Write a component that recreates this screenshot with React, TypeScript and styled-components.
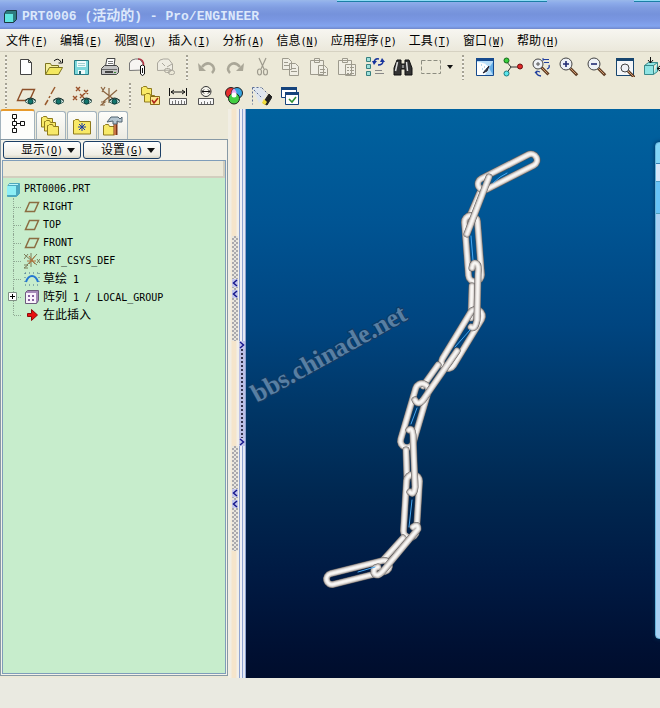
import React from 'react';
import styled, { createGlobalStyle } from 'styled-components';

const GlobalStyle = createGlobalStyle`
  * { box-sizing: border-box; }
  body { margin: 0; background: #ece9d8; }
  button { font: inherit; color: inherit; margin: 0; padding: 0; border: 0; background: none; }
`;

const Window = styled.div`
  display: flex;
  flex-direction: column;
  min-height: 100vh;
  overflow: hidden;
  background: #ece9d8;
  color: #000;
  font-family: 'DejaVu Sans Mono', 'Noto Sans CJK SC', monospace;
  font-size: 10px;
  line-height: 18px;
`;

const Han = styled.span<{ $size: number }>`
  font-family: 'Noto Sans CJK SC', sans-serif;
  font-size: ${(p) => p.$size}px;
`;

const TitleBar = styled.header`
  position: relative;
  display: flex;
  align-items: center;
  gap: 5px;
  height: 29px;
  padding: 2px 3px 0;
  background: linear-gradient(#9ab8ea 0, #8cabea 3px, #7f9ce0 8px, #7592db 14px, #7a97e2 20px, #82a4ef 26px, #7088cc 29px);
`;

const Title = styled.h1`
  margin: 0;
  font-family: 'Liberation Mono', 'Noto Sans CJK SC', monospace;
  font-size: 13px;
  line-height: 20px;
  font-weight: 700;
  color: #dce8fb;
  white-space: pre;
`;

const BackTabs = styled.div`
  position: absolute;
  inset: 0 0 auto 0;
  display: flex;
  justify-content: flex-end;
  gap: 87px;
  height: 2px;
`;

const BackTab = styled.div<{ $width: number }>`
  width: ${(p) => p.$width}px;
  background: #8fdcf5;
  border-bottom: 1px solid #1b7fa6;
`;

const MenuBar = styled.nav`
  display: flex;
  gap: 12px;
  height: 23px;
  padding: 1px 6px 0;
  background: linear-gradient(#f7f6f1, #ebe8db);
  border-bottom: 1px solid #d6d2c2;
`;

const MenuItem = styled.button`
  white-space: nowrap;
  line-height: 18px;
`;

const ToolRow = styled.div<{ $height: number }>`
  display: flex;
  align-items: center;
  height: ${(p) => p.$height}px;
  overflow: hidden;
`;

const Grip = styled.div<{ $width: number }>`
  flex: none;
  display: flex;
  justify-content: center;
  width: ${(p) => p.$width}px;
  height: 25px;
  &::before {
    content: '';
    width: 2px;
    background: repeating-linear-gradient(#a5a294 0 2px, #f5f3ea 2px 4px);
  }
`;

const ToolButton = styled.button<{ $width?: number }>`
  flex: none;
  display: flex;
  align-items: center;
  justify-content: center;
  width: ${(p) => p.$width ?? 28}px;
  height: 26px;
`;

const Work = styled.main`
  flex: 1;
  display: flex;
`;

const Navigator = styled.aside`
  flex: none;
  display: flex;
  flex-direction: column;
  width: 228px;
  padding-bottom: 2px;
`;

const Tabs = styled.div`
  display: flex;
  align-items: flex-end;
  gap: 1px;
  height: 30px;
`;

const Tab = styled.button<{ $active?: boolean }>`
  display: flex;
  align-items: center;
  justify-content: center;
  width: ${(p) => (p.$active ? 35 : 30)}px;
  height: ${(p) => (p.$active ? 30 : 28)}px;
  padding-bottom: ${(p) => (p.$active ? 2 : 0)}px;
  border: 1px solid #a3b3bd;
  border-top: ${(p) => (p.$active ? '2px solid #e79a2c' : '1px solid #a3b3bd')};
  border-bottom: 0;
  border-radius: 3px 3px 0 0;
  background: ${(p) => (p.$active ? '#fdfdfb' : 'linear-gradient(#fdfdfa, #ecebe2)')};
`;

const Panel = styled.section`
  flex: 1;
  display: flex;
  flex-direction: column;
  padding: 1px 1px 1px;
  border: 1px solid #8799a5;
  background: #f4f2e9;
`;

const PanelButtons = styled.div`
  display: flex;
  gap: 2px;
  height: 18px;
  padding-left: 1px;
`;

const MenuButton = styled.button`
  display: flex;
  align-items: center;
  gap: 4px;
  width: 78px;
  height: 18px;
  padding-left: 17px;
  border: 1px solid #1c3f66;
  border-radius: 3px;
  background: linear-gradient(#fff, #efede4 80%, #d9d5c6);
  line-height: 16px;
  white-space: nowrap;
`;

const TreeBox = styled.div`
  flex: 1;
  display: flex;
  flex-direction: column;
  margin-top: 1px;
  border: 1px solid #7f9db9;
  background: #c7edcc;
`;

const TreeHeader = styled.div`
  height: 17px;
  border-right: 2px solid #d2cebe;
  border-bottom: 2px solid #d2cebe;
  background: #ece9d8;
`;

const Tree = styled.ul`
  margin: 0;
  padding: 2px 0 0 3px;
  list-style: none;
`;

const TreeRow = styled.li`
  display: flex;
  align-items: center;
  gap: 3px;
  height: 18px;
  white-space: pre;
`;

const Branch = styled.div<{ $last?: boolean }>`
  position: relative;
  display: flex;
  align-items: center;
  width: 14px;
  height: 18px;
  margin-left: 1px;
  &::before {
    content: '';
    width: 6px;
    height: ${(p) => (p.$last ? 9 : 18)}px;
    align-self: flex-start;
    border-right: 1px dotted #8fa893;
  }
  &::after {
    content: '';
    flex: 1;
    border-top: 1px dotted #8fa893;
  }
`;

const Expander = styled.button`
  position: absolute;
  left: 1px;
  top: 4px;
  display: flex;
  width: 9px;
  height: 9px;
`;

const Splitter = styled.div`
  flex: none;
  display: flex;
  width: 18px;
`;

const SplitLeft = styled.div`
  display: flex;
  flex-direction: column;
  justify-content: center;
  gap: 105px;
  width: 11px;
  padding-left: 4px;
  background: linear-gradient(90deg, #f1eee4 0 3px, #f5e5cb 4px 8px, #f2efe8 9px);
`;

const SplitRight = styled.div`
  display: flex;
  flex-direction: column;
  justify-content: center;
  width: 7px;
  background: linear-gradient(90deg, #8fa3d0 0 1px, #f0f1f6 1px 3px, #8fa3d0 3px 4px, #e4e9f4 4px 6px, #8fa3d0 6px);
`;

const GripButton = styled.button<{ $kind: 'hide' | 'show' }>`
  display: flex;
  flex-direction: column;
  align-items: center;
  justify-content: ${(p) => (p.$kind === 'hide' ? 'center' : 'space-between')};
  gap: 3px;
  width: 6px;
  height: 105px;
  background: ${(p) =>
    p.$kind === 'hide'
      ? 'repeating-conic-gradient(#aaa9ad 0 25%, #e9e6dd 0 50%) 0 0 / 4px 4px'
      : 'repeating-linear-gradient(transparent 0 2px, #bcc0e6 2px 4px), linear-gradient(90deg, #bcc0e6 2px, #34344c 2px 4px, #bcc0e6 4px)'};
`;

const Chevron = styled.svg`
  flex: none;
  background: #c3c6ea;
`;

const Viewport = styled.section`
  position: relative;
  flex: 1;
  min-width: 0;
  overflow: hidden;
  background: linear-gradient(#00629f 0, #005493 20%, #004580 38%, #003666 53%, #002750 68%, #001a43 82%, #000f31 96%, #000d2c);
`;

const Scene = styled.svg`
  position: absolute;
  left: 0;
  top: 0;
`;

const FloatingPanel = styled.div`
  position: absolute;
  right: -8px;
  top: 33px;
  bottom: 39px;
  width: 13px;
  border: 1px solid #6ab5da;
  border-radius: 4px;
  box-shadow: 0 0 4px #00305a;
  background: linear-gradient(#83d5f7 0 20px, #347fb4 20px 21px, #d7e7fa 21px 38px, #4e9cc4 38px 39px, #67c2f7 39px 70px, #4c9fbd 70px 71px, #a9d1f4 71px);
`;

const StatusBar = styled.footer`
  height: 30px;
  background: #eaeae1;
`;

function Mixed({ text, size = 12 }: { text: string; size?: number }) {
  return (
    <>
      {text.split(/([\u4e00-\u9fff]+)/).map((part, i) =>
        i % 2 ? <Han key={i} $size={size}>{part}</Han> : part,
      )}
    </>
  );
}

function Mnemonic({ text, letter }: { text: string; letter: string }) {
  return (
    <span>
      <Mixed text={text} />(<u>{letter}</u>)
    </span>
  );
}

function Icon({ children, size = 20 }: { children: React.ReactNode; size?: number }) {
  return (
    <svg width={size} height={size} viewBox={`0 0 ${size} ${size}`} fill="none" stroke="#222" aria-hidden="true">
      {children}
    </svg>
  );
}

const Eye = () => (
  <g>
    <path d="M9 15.500q5.500-6 11 0q-5.500 5-11 0z" fill="#d9f1ee" stroke="#46665f" />
    <path d="M9 14.500q5.500-5 11 0" stroke="#1b3331" />
    <circle cx="14.5" cy="15.500" r="2.500" fill="#12756c" stroke="#0b3f3b" />
  </g>
);

const Folder = ({ x = 0, y = 0, w = 11, h = 9 }: { x?: number; y?: number; w?: number; h?: number }) => (
  <path d={`M${x + 0.5} ${y + h}V${y + 1.5}h1l1-1h3l1 2h${w - 7}V${y + h}z`} fill="#f8e968" stroke="#8f7a1c" />
);

const Magnifier = ({ x = 0, y = 0, r = 5 }: { x?: number; y?: number; r?: number }) => (
  <g transform={`translate(${x} ${y})`}>
    <path d={`M${7 + r * 0.7} ${7 + r * 0.7}l7 7`} stroke="#5d3b22" strokeWidth="3" />
    <path d={`M${7 + r * 0.7} ${7 + r * 0.7}l6 6`} stroke="#d09a70" />
    <circle cx="7" cy="7" r={r} fill="#eef1f6" stroke="#444" />
  </g>
);

const Crosses = ({ points, color }: { points: number[][]; color: string }) => (
  <path d={points.map(([x, y]) => `M${x - 2} ${y - 2}l4 4m0-4l-4 4`).join('')} stroke={color} strokeWidth="1.4" />
);

const icons: Record<string, React.ReactNode> = {
  new: <path d="M4.500 2.500h8l3 3v12h-11zM12.500 2.500v3h3" fill="#fff" stroke="#444" />,
  open: (
    <>
      <path d="M1.500 17V6.500h5l1 2h7V11" fill="#f5ef9c" stroke="#7d7420" />
      <path d="M1.500 17.500l4-7h13l-4 7z" fill="#f4e860" stroke="#7d7420" />
      <path d="M10 4q4-4 7 1M18.500 2v4h-4" stroke="#111" />
    </>
  ),
  save: (
    <>
      <path d="M2.500 3.500h14v14h-14z" fill="#7ed8dc" stroke="#277a83" />
      <path d="M5 4h9v6H5zM6 13h7v4H6z" fill="#f0fbfb" stroke="none" />
      <path d="M7 14h2v3H7z" fill="#236870" stroke="none" />
      <path d="M6 6.500h7M6 8.500h7" stroke="#9fd0d0" />
    </>
  ),
  print: (
    <>
      <path d="M5.500 9L7 1.500h8L14 9z" fill="#fff" stroke="#444" />
      <path d="M8 4.500h5M8 6.500h5" stroke="#777" />
      <path d="M1.500 17.500v-6l3-3h12l2 2v5l-2 2z" fill="#c3c3c3" stroke="#444" />
      <path d="M2 12.500h15" stroke="#666" />
      <path d="M5 15h8" stroke="#444" strokeWidth="2" />
      <path d="M14 15.500h2" stroke="#3c8c37" />
    </>
  ),
  mail: (
    <>
      <path d="M1.500 13.500V6q2-4 6-4h4l4 5v6z" fill="#f7f5f2" stroke="#777" />
      <path d="M10 2q6 0 5.500 7" stroke="#b03545" strokeWidth="1.500" />
      <path d="M12.500 17V9q2-2 4 0v8q-2 3-4 0zM14.500 11v5" fill="#fff" stroke="#111" />
    </>
  ),
  link: (
    <g stroke="#aaa79c">
      <path d="M1.500 13.500V6q2-4 6-4h5l4 5v6zM6 6l3 3M16 7l-5 3" fill="#eeece2" />
      <rect x="8.500" y="11.500" width="6" height="4" rx="2" />
      <rect x="12.500" y="13.500" width="6" height="4" rx="2" />
    </g>
  ),
  undo: (
    <>
      <path d="M5 10q5-6 10-2q4 4 0 8" stroke="#aaa798" strokeWidth="2.500" />
      <path d="M1 6l1 8h7z" fill="#aaa798" stroke="none" />
    </>
  ),
  redo: (
    <>
      <path d="M15 10q-5-6-10-2q-4 4 0 8" stroke="#aaa798" strokeWidth="2.500" />
      <path d="M19 6l-1 8h-7z" fill="#aaa798" stroke="none" />
    </>
  ),
  cut: (
    <g stroke="#9d9a8d" strokeWidth="1.200">
      <path d="M6 1l5 11M13 1L8 12" />
      <ellipse cx="6.500" cy="15" rx="2" ry="3" />
      <ellipse cx="12.500" cy="15" rx="2" ry="3" />
    </g>
  ),
  copy: (
    <g stroke="#9d9a8d" fill="#f0eee4">
      <path d="M1.500 1.500h6l3 3v8h-9zM3 5.500h4M3 8.500h5M8.500 6.500h6l3 3v9h-9zM10 11.500h5M10 14.500h6" />
    </g>
  ),
  paste: (
    <g stroke="#9d9a8d" fill="#f0eee4">
      <path d="M1.500 3.500h13v14h-13zM5.500 1.500h5v4h-5zM9.500 8.500h6l3 3v7h-9zM11 12.500h5M11 15.500h6" />
    </g>
  ),
  pasteSpecial: (
    <g stroke="#9d9a8d" fill="#f0eee4">
      <path d="M1.500 3.500h13v14h-13zM5.500 1.500h5v4h-5zM8.500 7.500h10v11h-10zM10 10.500h2m1 0h4m-7 3h2m1 0h4m-7 3h2m1 0h4" />
    </g>
  ),
  regenerate: (
    <>
      <path d="M1.500 .5h4v4h-4zM1.500 7.500h4v4h-4zM1.500 14.500h4v4h-4z" fill="#9ee0dc" stroke="#37807f" />
      <path d="M10 13.500h7M10 16.500h9" stroke="#888" />
      <path d="M9 5q1-4 5-3M18 4q0 4-5 4" stroke="#16339c" strokeWidth="1.500" />
      <path d="M7 4h5l-3 4zM15 5h5l-3-4z" fill="#16339c" stroke="none" />
    </>
  ),
  find: (
    <>
      <path d="M4 3h4v4h4V3h4l3 8v7h-7v-6H8v6H1v-7z" fill="#333" stroke="#111" />
      <path d="M4.500 5l-2 9M13.500 5l1 9" stroke="#ddd" strokeWidth="1.500" />
      <path d="M9 8h2v3H9z" fill="#888" stroke="none" />
    </>
  ),
  select: <path d="M.5 3.500h19v13H.5z" stroke="#8c8c80" strokeDasharray="4 2" />,
  repaint: (
    <>
      <path d="M1.500 1.500h17v17h-17z" fill="#b8ddf8" stroke="#164a8e" />
      <path d="M1 1h18v3H1z" fill="#164a8e" stroke="none" />
      <path d="M2 5q9 0 12 6l-4 7H2z" fill="#fff" stroke="none" />
      <path d="M6 8h1M9 10h1M7 12h1M11 12h1M9 14h1" stroke="#6aaed8" />
      <path d="M14 9l-6 7 4-2z" stroke="#223" fill="#345" />
      <path d="M18 5l-4 6 4 7z" fill="#66aee6" stroke="none" />
    </>
  ),
  spin: (
    <>
      <path d="M3 4l5 6h9M8 10l-5 7" stroke="#333" />
      <circle cx="3.500" cy="3.500" r="2.500" fill="#39cf3c" stroke="#14671a" />
      <circle cx="17" cy="9.500" r="2.500" fill="#e02929" stroke="#6e1010" />
      <circle cx="3.500" cy="16.500" r="2.500" fill="#5ce6ec" stroke="#1c7c82" />
    </>
  ),
  orient: (
    <>
      <Magnifier r={5} />
      <path d="M5 7h4M7 5v4" stroke="#555" />
      <path d="M12 2.500h6m-5 3h5M12 1v3" stroke="#203f9e" />
      <path d="M18 8q1 3-2 4M6 14q-2 4 4 5M6 14l-2 2M6 14l3 1" stroke="#203f9e" strokeWidth="1.300" />
    </>
  ),
  zoomIn: (
    <>
      <Magnifier r={6} />
      <path d="M4 7h6M7 4v6" stroke="#202b74" strokeWidth="1.600" />
    </>
  ),
  zoomOut: (
    <>
      <Magnifier r={6} />
      <path d="M4 7h6" stroke="#202b74" strokeWidth="1.600" />
    </>
  ),
  refit: (
    <>
      <path d="M1.500 1.500h17v17h-17z" fill="#f4f6f8" stroke="#17466f" />
      <path d="M1 1h18v3H1z" fill="#17466f" stroke="none" />
      <Magnifier x={3} y={4} r={4} />
    </>
  ),
  views: (
    <>
      <path d="M1.500 8.500h9v9h-9zM1.500 8.500l4-3h9l-4 3zM10.500 17.500l4-3v-9" fill="#8fe4e3" stroke="#3a8b8b" />
      <path d="M7.500 0v6M5 3l2.500 3L10 3M20 11.500h-6M17 9l-3 2.500 3 2.500" stroke="#111" />
    </>
  ),
  planes: (
    <>
      <path d="M6.500 3.500h12l-5 11h-12z" stroke="#8d4f28" strokeWidth="1.400" />
      <Eye />
    </>
  ),
  axes: (
    <>
      <path d="M11 1L7 8M6 10l-1 2M4 14l-3 5" stroke="#9a5b2e" strokeWidth="1.500" />
      <Eye />
    </>
  ),
  points: (
    <>
      <Crosses points={[[6, 3], [14, 6], [3, 12], [10, 10]]} color="#9a4f28" />
      <Eye />
    </>
  ),
  csys: (
    <>
      <path d="M1 1l2 3m2-3L2 6M9 2v15M3 5l13 10M17 4L3 16M1 16h4l-4 3h4" stroke="#8b643f" strokeWidth="1.200" />
      <Eye />
    </>
  ),
  layers: (
    <>
      <Folder x={1} y={0} />
      <Folder x={4} y={7} />
      <path d="M10.500 10.500h9v8h-9z" fill="#ffe78e" stroke="#876b18" />
      <path d="M12 14l2 3 4-5" stroke="#ad2418" strokeWidth="1.600" />
    </>
  ),
  distance: (
    <>
      <path d="M1.500 2v8M18.500 2v8M3 6h14M6 4L3 6l3 2M14 4l3 2-3 2" stroke="#111" />
      <path d="M1.500 12.500h17v6h-17z" fill="#f7f7f7" stroke="#555" />
      <path d="M4.500 15v3M7.500 14v4M10.500 15v3M13.500 14v4M16.500 15v3" stroke="#777" />
    </>
  ),
  diameter: (
    <>
      <circle cx="10" cy="5.500" r="5" fill="#f8f7ef" stroke="#333" />
      <path d="M6 5.500h8M8 3.500l-2 2 2 2M12 3.500l2 2-2 2" stroke="#111" />
      <path d="M2.500 12.500h15v6h-15z" fill="#f7f7f7" stroke="#555" />
      <path d="M5.500 16v2M8.500 15v3M11.500 16v2M14.500 15v3" stroke="#777" />
    </>
  ),
  colors: (
    <>
      <circle cx="7" cy="7" r="5.500" fill="#e62e2e" />
      <circle cx="13" cy="7" r="5.500" fill="#35a3df" />
      <circle cx="10" cy="12.500" r="5.500" fill="#42ce42" />
      <path d="M10 2.500q3 3 2.500 5.500q-2 2-5 0Q7 5 10 2.500z" fill="#e4a6f1" stroke="none" />
      <circle cx="10" cy="9" r="2.500" fill="#fff" stroke="none" />
    </>
  ),
  shade: (
    <>
      <path d="M0 1h8l7 7-8 9z" fill="#dfe6ee" stroke="none" />
      <path d="M.5 1.500h9M10 2l6 6M.5 1.500v17M2 4l8 8" stroke="#5a6c93" strokeDasharray="2 2" />
      <path d="M11 17l6-9 3 3-5 8z" fill="#222" />
      <path d="M12 13l3 3-2 3-3-2z" fill="#efdc3c" stroke="none" />
    </>
  ),
  verify: (
    <>
      <path d="M1.500 1.500h15v10h-15z" fill="#fff" stroke="#15437c" />
      <path d="M1 1h16v3H1z" fill="#15437c" stroke="none" />
      <path d="M5.500 6.500h13v12h-13z" fill="#fff" stroke="#15437c" />
      <path d="M9 13l3 3 4-5" stroke="#2e8f33" strokeWidth="1.600" />
      <path d="M5 6h14v3H5z" fill="#15437c" stroke="none" />
    </>
  ),
  cube: (
    <>
      <path d="M1.500 4.500l2-3h10v9l-3 3h-9z" fill="#2e7c80" stroke="#1b3a40" />
      <path d="M2 5h8v8H2z" fill="#61e6df" stroke="none" />
    </>
  ),
  part: (
    <>
      <path d="M1.500 4.500l2-3h10v10l-3 3h-9z" fill="#4ca8be" stroke="#4ca8be" />
      <path d="M1 4h9v9H1z" fill="#8deff6" stroke="none" />
      <path d="M3 2.500h9" stroke="#bdf6f8" />
    </>
  ),
  treeTab: <path d="M4.500 .5h4v4h-4zM4.500 7.500h4v4h-4zM4.500 14.500h4v4h-4zM12.500 7.500h4v4h-4zM6.500 5v2M6.500 12v2M9 9.500h3" stroke="#111" />,
  folders: (
    <>
      <Folder x={0} y={0} w={12} h={11} />
      <Folder x={3} y={4} w={12} h={11} />
      <Folder x={6} y={8} w={12} h={11} />
    </>
  ),
  favorites: (
    <>
      <Folder x={1} y={3} w={18} h={15} />
      <path d="M10 7v8M6 11h8M7 8l6 6M13 8l-6 6" stroke="#1d3da6" />
    </>
  ),
  tools: (
    <>
      <Folder x={0} y={8} w={12} h={11} />
      <path d="M12.500 6v13" stroke="#7c351a" strokeWidth="4" />
      <path d="M12 8v11" stroke="#e08750" strokeWidth="1.500" />
      <path d="M4 6l4-5h7l2 2 2-2v5h-3l-2-1v3h-4V5z" fill="#b5c6d1" stroke="#50626f" />
    </>
  ),
  datum: <path d="M5.500 3.500h9l-4 9h-9z" stroke="#8b6d42" strokeWidth="1.500" />,
  treeCsys: (
    <>
      <path d="M0 1l3 3m1-3L0 6M7 0v14M2 3l11 9M13 1L3 12M0 12h4l-4 3h4M13 6l3 4m0-4l-3 4" stroke="#7a7d58" />
      <path d="M5 3l6 8M3 8h9M11 3l-6 8" stroke="#b2703a" />
    </>
  ),
  sketch: (
    <>
      <path d="M1 2h14M1 14h14M1 2v12M15 2v12" stroke="#426d8b" strokeDasharray="1 3" />
      <path d="M2 11q2-6 6-6t6 6" stroke="#2477d1" strokeWidth="2" />
    </>
  ),
  pattern: (
    <>
      <path d="M1.500 3.500l2-2h11v10l-2 3h-11z" fill="#a58ab9" stroke="#6c5b7c" />
      <path d="M2 4h10v10H2z" fill="#f9f2fc" stroke="none" />
      <path d="M4 6h2v2H4zM8 6h2v2H8zM4 10h2v2H4zM8 10h2v2H8z" fill="#85619e" stroke="none" />
    </>
  ),
  insert: <path d="M3.500 6.500h4v-4l6 5.500-6 5.500v-4h-4z" fill="#e80f0f" stroke="#8e0a0a" />,
};

const DownArrow = () => (
  <svg width="8" height="5" viewBox="0 0 8 5" aria-hidden="true">
    <path d="M0 0h8L4 5z" fill="#111" />
  </svg>
);

const menus = [
  ['文件', 'F'], ['编辑', 'E'], ['视图', 'V'], ['插入', 'I'], ['分析', 'A'],
  ['信息', 'N'], ['应用程序', 'P'], ['工具', 'T'], ['窗口', 'W'], ['帮助', 'H'],
];

const fileTools = ['new', 'open', 'save', 'print', 'mail', 'link'];
const editTools = ['undo', 'redo', 'cut', 'copy', 'paste', 'pasteSpecial', 'regenerate', 'find', 'select'];
const viewTools = ['repaint', 'spin', 'orient', 'zoomIn', 'zoomOut', 'refit', 'views'];
const datumTools = ['planes', 'axes', 'points', 'csys'];
const analysisTools = ['layers', 'distance', 'diameter', 'colors', 'shade', 'verify'];

const Tools = ({ names }: { names: string[] }) => (
  <>
    {names.map((name) => (
      <ToolButton key={name} aria-label={name}>
        <Icon>{icons[name]}</Icon>
      </ToolButton>
    ))}
  </>
);

const treeItems = [
  { icon: 'datum', text: 'RIGHT' },
  { icon: 'datum', text: 'TOP' },
  { icon: 'datum', text: 'FRONT' },
  { icon: 'treeCsys', text: 'PRT_CSYS_DEF' },
  { icon: 'sketch', text: '草绘 1' },
  { icon: 'pattern', text: '阵列 1 / LOCAL_GROUP', expandable: true },
  { icon: 'insert', text: '在此插入' },
];

const Arrow = ({ back }: { back?: boolean }) => (
  <Chevron width="6" height="8" viewBox="0 0 6 8" aria-hidden="true">
    <path d={back ? 'M5 1L1.500 4 5 7' : 'M1 1l3.500 3L1 7'} fill="none" stroke="#17178c" strokeWidth="1.500" />
  </Chevron>
);

const HideGrip = () => (
  <GripButton $kind="hide" aria-label="hide">
    <Arrow back />
    <Arrow back />
  </GripButton>
);

/* Outline of a chain link: two parallel rods joined by half circles round both centres. */
function link(x1: number, y1: number, x2: number, y2: number, r: number) {
  const length = Math.hypot(x2 - x1, y2 - y1);
  const nx = (-(y2 - y1) / length) * r;
  const ny = ((x2 - x1) / length) * r;
  return `M${x1 + nx} ${y1 + ny}L${x2 + nx} ${y2 + ny}A${r} ${r} 0 0 0 ${x2 - nx} ${y2 - ny}L${x1 - nx} ${y1 - ny}A${r} ${r} 0 0 0 ${x1 + nx} ${y1 + ny}Z`;
}

/* Each rod is drawn in window coordinates, back to front. */
const rods = [
  'M481 190L469 218',
  link(484, 184, 531, 160, 6),
  link(471, 222, 475, 275, 6.5),
  'M489 177L467 234',
  'M472 286L471 318',
  link(476, 316, 448, 362, 6.5),
  'M472 268Q473 261 477 264Q479 266 478 274L477 320Q475 330 471 327',
  'M438 365L423 386',
  link(422, 390, 407, 441, 6.5),
  'M457 351L423 400Q418 406 415 400',
  'M406 450L407 480',
  link(413, 481, 410, 531, 6.5),
  'M409 430Q412 427 413 435L415 487Q414 496 410 492',
  'M403 538L384 559',
  link(332, 579, 384, 566, 5.5),
  'M413 527Q418 523 418 529L383 571Q377 578 374 573Q373 568 378 567',
];

const curves = [
  'M493 183Q500 176 507 173', 'M471 236L473 260', 'M470 330L455 347',
  'M417 408L411 424', 'M412 500L409 527', 'M358 572L375 567',
];

function Chain() {
  return (
    <Scene width="414" height="569" viewBox="246 109 414 569" role="img" aria-label="chain">
      <text
        transform="translate(257 403) rotate(-29)"
        fontFamily="'Liberation Serif', serif"
        fontSize="26"
        fontWeight="700"
        fill="#587fa3"
        stroke="#123a62"
        strokeWidth="2"
        paintOrder="stroke"
      >
        bbs.chinade.net
      </text>
      <g fill="none" strokeLinecap="round" strokeLinejoin="round">
        {rods.map((d) => (
          <g key={d}>
            <path d={d} stroke="#5d5a59" strokeWidth="7" />
            <path d={d} stroke="#bdb7b4" strokeWidth="6" />
            <path d={d} stroke="#e6e2df" strokeWidth="4" />
            <path d={d} stroke="#f8f6f4" strokeWidth="2" />
          </g>
        ))}
        {curves.map((d) => (
          <path key={d} d={d} stroke="#48a8f2" />
        ))}
      </g>
    </Scene>
  );
}

export default function App() {
  return (
    <>
      <GlobalStyle />
      <Window>
        <TitleBar>
          <BackTabs>
            <BackTab $width={210} />
            <BackTab $width={26} />
          </BackTabs>
          <Icon size={14}>{icons.cube}</Icon>
          <Title><Mixed text="PRT0006 (活动的) - Pro/ENGINEER" size={14} /></Title>
        </TitleBar>
        <MenuBar>
          {menus.map(([text, letter]) => (
            <MenuItem key={letter}><Mnemonic text={text} letter={letter} /></MenuItem>
          ))}
        </MenuBar>
        <ToolRow $height={30}>
          <Grip $width={12} />
          <Tools names={fileTools} />
          <Grip $width={13} />
          <Tools names={editTools} />
          <ToolButton $width={10} aria-label="select options">
            <svg width="6" height="4" viewBox="0 0 6 4"><path d="M0 0h6L3 4z" fill="#111" /></svg>
          </ToolButton>
          <Grip $width={16} />
          <Tools names={viewTools} />
        </ToolRow>
        <ToolRow $height={27}>
          <Grip $width={12} />
          <Tools names={datumTools} />
          <Grip $width={12} />
          <Tools names={analysisTools} />
        </ToolRow>
        <Work>
          <Navigator>
            <Tabs role="tablist">
              <Tab $active role="tab" aria-selected="true" aria-label="model tree"><Icon>{icons.treeTab}</Icon></Tab>
              {['folders', 'favorites', 'tools'].map((name) => (
                <Tab key={name} role="tab" aria-label={name}><Icon>{icons[name]}</Icon></Tab>
              ))}
            </Tabs>
            <Panel>
              <PanelButtons>
                <MenuButton><Mnemonic text="显示" letter="O" /><DownArrow /></MenuButton>
                <MenuButton><Mnemonic text="设置" letter="G" /><DownArrow /></MenuButton>
              </PanelButtons>
              <TreeBox>
                <TreeHeader />
                <Tree>
                  <TreeRow><Icon size={15}>{icons.part}</Icon><span>PRT0006.PRT</span></TreeRow>
                  {treeItems.map((item, i) => (
                    <TreeRow key={item.text}>
                      <Branch $last={i === treeItems.length - 1}>
                        {item.expandable && (
                          <Expander aria-label="expand">
                            <svg width="9" height="9" viewBox="0 0 9 9">
                              <path d="M.5.5h8v8h-8z" fill="#fff" stroke="#7f8f84" />
                              <path d="M2 4.500h5M4.500 2v5" stroke="#000" />
                            </svg>
                          </Expander>
                        )}
                      </Branch>
                      <Icon size={16}>{icons[item.icon]}</Icon>
                      <span><Mixed text={item.text} /></span>
                    </TreeRow>
                  ))}
                </Tree>
              </TreeBox>
            </Panel>
          </Navigator>
          <Splitter>
            <SplitLeft>
              <HideGrip />
              <HideGrip />
            </SplitLeft>
            <SplitRight>
              <GripButton $kind="show" aria-label="show">
                <Arrow />
                <Arrow />
              </GripButton>
            </SplitRight>
          </Splitter>
          <Viewport>
            <Chain />
            <FloatingPanel />
          </Viewport>
        </Work>
        <StatusBar />
      </Window>
    </>
  );
}
